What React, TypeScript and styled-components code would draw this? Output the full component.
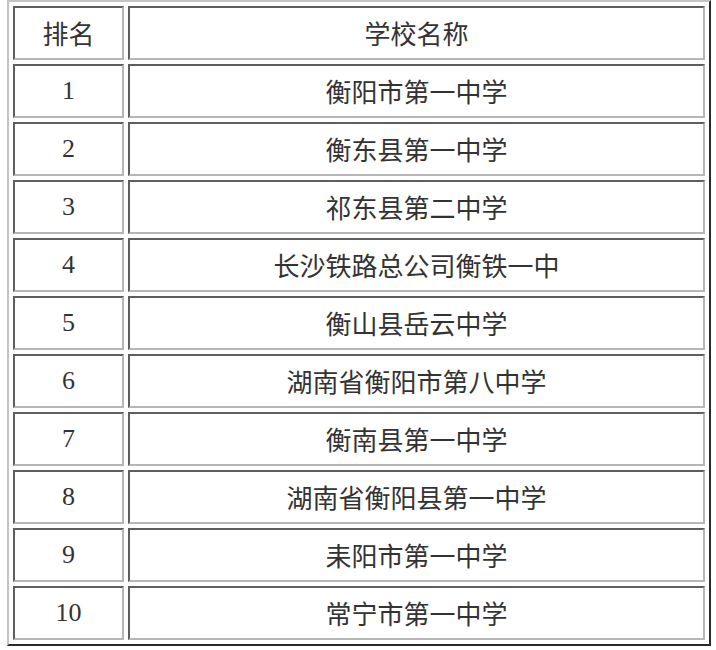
import React from "react";
import styled, { createGlobalStyle } from "styled-components";

const Global = createGlobalStyle`
  html, body { margin: 0; padding: 0; background: #ffffff; }
  #root { width: 716px; height: 650px; }
`;

const Table = styled.table`
  margin-left: 7px;
  width: 704px;
  table-layout: fixed;
  border-collapse: separate;
  border-spacing: 4px;
  border-style: solid;
  border-width: 2px;
  border-color: #c4c4c4 #2a2a2a #2a2a2a #c4c4c4;
  box-sizing: border-box;
`;

const Col = styled.col<{ $w: number }>`
  width: ${(p) => p.$w}px;
`;

const Cell = styled.td<{ $serif?: boolean }>`
  box-sizing: border-box;
  height: 54px;
  padding: 0;
  border-style: solid;
  border-width: 2px;
  border-color: #5e5e5e #b6b6b6 #b6b6b6 #5e5e5e;
  text-align: center;
  vertical-align: middle;
  color: #333333;
  font-size: 26px;
  line-height: 1;
  font-family: ${(p) =>
    p.$serif
      ? `"Liberation Serif", "Times New Roman", serif`
      : `"Noto Sans CJK SC", "Noto Sans", sans-serif`};
`;

const rows = [
  "衡阳市第一中学",
  "衡东县第一中学",
  "祁东县第二中学",
  "长沙铁路总公司衡铁一中",
  "衡山县岳云中学",
  "湖南省衡阳市第八中学",
  "衡南县第一中学",
  "湖南省衡阳县第一中学",
  "耒阳市第一中学",
  "常宁市第一中学",
];

export default function App() {
  return (
    <>
      <Global />
      <Table>
        <colgroup>
          <Col $w={111} />
          <Col $w={577} />
        </colgroup>
        <tbody>
          <tr>
            <Cell>排名</Cell>
            <Cell>学校名称</Cell>
          </tr>
          {rows.map((name, i) => (
            <tr key={name}>
              <Cell $serif>{i + 1}</Cell>
              <Cell>{name}</Cell>
            </tr>
          ))}
        </tbody>
      </Table>
    </>
  );
}
